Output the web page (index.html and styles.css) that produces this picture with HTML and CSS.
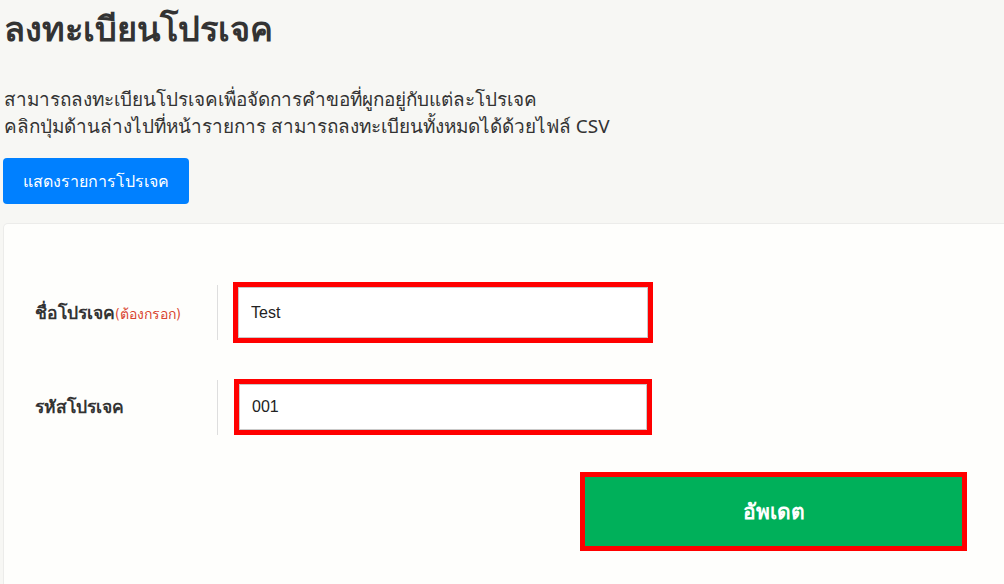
FILE: index.html
```html
<!DOCTYPE html>
<html lang="th">
<head>
<meta charset="utf-8">
<title>ลงทะเบียนโปรเจค</title>
<link rel="stylesheet" href="styles.css">
</head>
<body>
<div class="page">
  <h1 class="title">ลงทะเบียนโปรเจค</h1>
  <p class="desc">สามารถลงทะเบียนโปรเจคเพื่อจัดการคำขอที่ผูกอยู่กับแต่ละโปรเจค<br>คลิกปุ่มด้านล่างไปที่หน้ารายการ สามารถลงทะเบียนทั้งหมดได้ด้วยไฟล์ CSV</p>
  <a class="btn-list" href="#">แสดงรายการโปรเจค</a>
  <div class="card">
    <div class="row row-name">
      <label class="label">ชื่อโปรเจค<span class="req">(ต้องกรอก)</span></label>
      <span class="divider"></span>
      <div class="mark mark-1"><input class="field" type="text" value="Test"></div>
    </div>
    <div class="row row-code">
      <label class="label">รหัสโปรเจค</label>
      <span class="divider"></span>
      <div class="mark mark-2"><input class="field" type="text" value="001"></div>
    </div>
    <div class="actions">
      <div class="mark mark-btn"><button class="btn-update" type="button">อัพเดต</button></div>
    </div>
  </div>
</div>
</body>
</html>
```
FILE: styles.css
```css
html, body {
  margin: 0;
  padding: 0;
  background: #f7f7f4;
  overflow: hidden;
}
body {
  font-family: "Noto Sans", "DejaVu Sans", sans-serif;
  color: #333;
}
.page {
  padding: 0 0 0 3px;
}
.title {
  margin: 0;
  padding: 8px 0 0 1px;
  font-size: 34.3px;
  line-height: 40px;
  font-weight: 700;
  color: #333;
}
.desc {
  margin: 38px 0 0 1px;
  font-size: 18.9px;
  line-height: 27px;
  color: #333;
}
.btn-list {
  display: inline-flex;
  align-items: center;
  justify-content: center;
  margin-top: 18px;
  width: 186px;
  height: 46px;
  background: #0080ff;
  color: #fff;
  border-radius: 4px;
  font-size: 16px;
  text-decoration: none;
}
.card {
  margin-top: 19px;
  width: 1010px;
  background: #fefefc;
  border: 1px solid #ececea;
  border-bottom: 0;
  border-radius: 5px 5px 0 0;
  box-sizing: border-box;
  padding: 58px 0 40px 31px;
}
.row {
  display: flex;
  align-items: center;
}
.row-code {
  margin-top: 36px;
}
.label {
  width: 182px;
  font-size: 17.5px;
  font-weight: 700;
  color: #333;
}
.req {
  font-family: "DejaVu Sans Condensed", "Noto Sans", sans-serif;
  font-weight: 400;
  font-size: 14px;
  color: #d9432f;
}
.divider {
  width: 1px;
  height: 55px;
  background: #dedede;
  margin-right: 15px;
}
.mark {
  border: 5px solid #ff0000;
  box-sizing: border-box;
}
.mark-1 {
  width: 420px;
  height: 61px;
}
.mark-2 {
  width: 418px;
  height: 56px;
  margin-left: 1px;
}
.field {
  display: block;
  width: 100%;
  height: 100%;
  box-sizing: border-box;
  margin: 0;
  border: 1px solid #c9c9c9;
  background: #fff;
  padding: 0 12px;
  font-family: "Liberation Sans", Arial, sans-serif;
  font-size: 16px;
  color: #222;
  outline: none;
}
.actions {
  display: flex;
  justify-content: flex-end;
  margin-top: 37px;
  padding-right: 45px;
}
.mark-btn {
  width: 387px;
  height: 79px;
}
.btn-update {
  display: block;
  width: 100%;
  height: 100%;
  border: 0;
  margin: 0;
  background: #00b05a;
  color: #fff;
  font-family: "Noto Sans", "DejaVu Sans", sans-serif;
  font-size: 21px;
  font-weight: 700;
  cursor: pointer;
}
```
